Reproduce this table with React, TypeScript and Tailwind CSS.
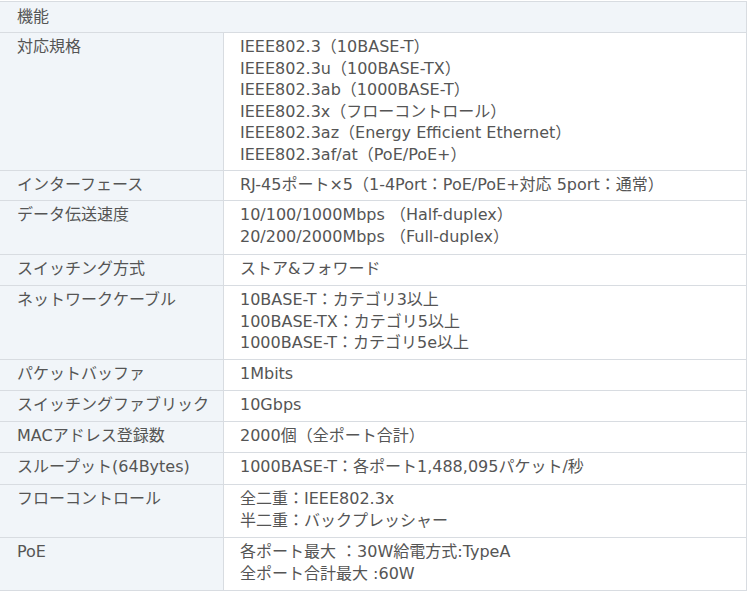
import React from "react";

const rows: [string, string[], string][] = [
  ["対応規格", [
    "IEEE802.3（10BASE-T）",
    "IEEE802.3u（100BASE-TX）",
    "IEEE802.3ab（1000BASE-T）",
    "IEEE802.3x（フローコントロール）",
    "IEEE802.3az（Energy Efficient Ethernet）",
    "IEEE802.3af/at（PoE/PoE+）",
  ], "h-[138px]"],
  ["インターフェース", ["RJ-45ポート×5（1-4Port：PoE/PoE+対応 5port：通常）"], "h-[30px]"],
  ["データ伝送速度", ["10/100/1000Mbps （Half-duplex）", "20/200/2000Mbps （Full-duplex）"], "h-[54px]"],
  ["スイッチング方式", ["ストア&フォワード"], "h-[31px]"],
  ["ネットワークケーブル", ["10BASE-T：カテゴリ3以上", "100BASE-TX：カテゴリ5以上", "1000BASE-T：カテゴリ5e以上"], "h-[74px]"],
  ["パケットバッファ", ["1Mbits"], "h-[31px]"],
  ["スイッチングファブリック", ["10Gbps"], "h-[31px]"],
  ["MACアドレス登録数", ["2000個（全ポート合計）"], "h-[31px]"],
  ["スループット(64Bytes)", ["1000BASE-T：各ポート1,488,095パケット/秒"], "h-[32px]"],
  ["フローコントロール", ["全二重：IEEE802.3x", "半二重：バックプレッシャー"], "h-[53px]"],
  ["PoE", ["各ポート最大 ：30W給電方式:TypeA", "全ポート合計最大 :60W"], "h-[53px]"],
];

export default function App() {
  return (
    <div className="w-[750px] h-[592px] bg-white overflow-hidden text-[16px] leading-[21.5px] text-[#555]" style={{ fontFamily: '"DejaVu Sans", "Noto Sans CJK JP", sans-serif' }}>
      <div className="w-[747px] border-t border-r border-[#d8dce1] mt-px">
        <div className="h-[31px] bg-[#f1f5f9] border-b border-[#d8dce1] pt-[4px] pl-[17px]">機能</div>
        {rows.map(([k, v, h]) => (
          <div key={k} className={`flex border-b border-[#d8dce1] ${h}`}>
            <div className="w-[224px] shrink-0 bg-[#f1f5f9] border-r border-[#d8dce1] pt-[3px] pl-[17px]">{k}</div>
            <div className="flex-1 pt-[3px] pl-[16px]">
              {v.map((l) => (
                <div key={l}>{l}</div>
              ))}
            </div>
          </div>
        ))}
      </div>
    </div>
  );
}
